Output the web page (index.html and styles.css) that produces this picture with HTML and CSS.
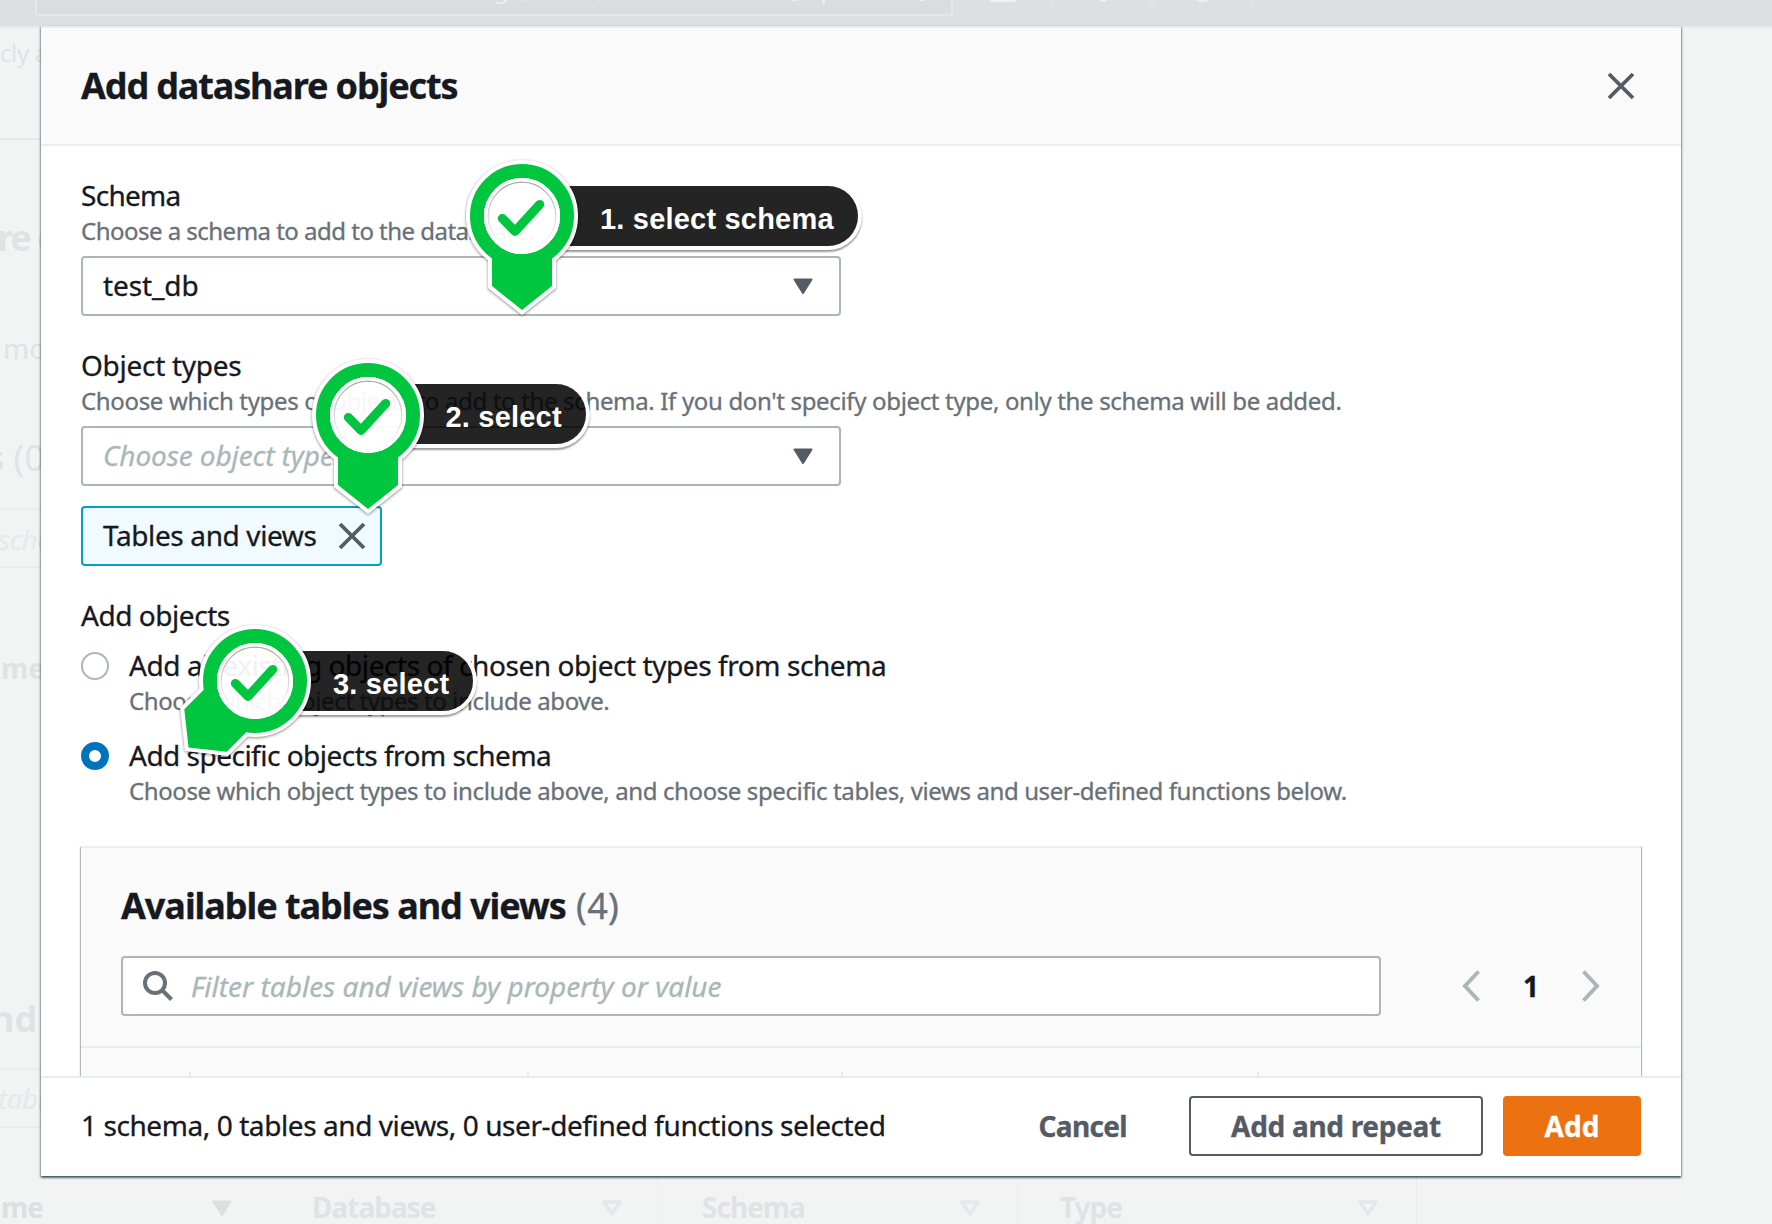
FILE: index.html
```html
<!DOCTYPE html>
<html lang="en">
<head>
<meta charset="utf-8">
<title>Add datashare objects</title>
<link rel="stylesheet" href="styles.css">
</head>
<body>
<div class="screen">

  <div class="backdrop" aria-hidden="true">
    <div class="topbar">
      <div class="topbar-search"><span class="topbar-hint">Search for services, features, blogs, docs, and more</span><span>[Option+S]</span></div>
      <svg class="topbar-icons" width="300" height="28" viewBox="0 0 300 28">
        <rect x="21" y="-20" width="28" height="22" rx="4" fill="#f0f1f2"/>
        <circle cx="135" cy="-3" r="5" fill="#f0f1f2"/>
        <circle cx="235" cy="-10" r="12" fill="#f0f1f2"/>
        <path d="M84 0v8M184 0v8M284 0v8" stroke="#e2e3e5" stroke-width="1.5"/>
      </svg>
    </div>
    <div class="strip">
      <span class="ghost ghost-note">cly a</span>
      <span class="ghost ghost-title">re objects</span>
      <span class="ghost ghost-more">mo</span>
      <span class="ghost ghost-count"><b>s</b> (0)</span>
      <span class="ghost ghost-input">schema</span>
      <span class="ghost ghost-name">me</span>
      <span class="ghost ghost-nd">nd</span>
      <span class="ghost ghost-input ghost-tab">table</span>
    </div>
    <div class="ghost-row">
      <div class="ghost-cell c1"><span>me</span><svg width="20" height="17" viewBox="0 0 20 17"><path d="M1.5 1.5h17L10 15z" fill="#dcdedf" stroke="#dcdedf" stroke-width="2" stroke-linejoin="round"/></svg></div>
      <div class="ghost-cell c2"><span>Database</span><svg width="20" height="17" viewBox="0 0 20 17"><path d="M2 2h16L10 14z" fill="none" stroke="#e5e8e8" stroke-width="3.4" stroke-linejoin="round"/></svg></div>
      <div class="ghost-cell c3"><span>Schema</span><svg width="20" height="17" viewBox="0 0 20 17"><path d="M2 2h16L10 14z" fill="none" stroke="#e5e8e8" stroke-width="3.4" stroke-linejoin="round"/></svg></div>
      <div class="ghost-cell c4"><span>Type</span><svg width="20" height="17" viewBox="0 0 20 17"><path d="M2 2h16L10 14z" fill="none" stroke="#e5e8e8" stroke-width="3.4" stroke-linejoin="round"/></svg></div>
    </div>
  </div>

  <div class="modal" role="dialog" aria-label="Add datashare objects">
    <header class="modal-header">
      <h1 class="modal-title">Add datashare objects</h1>
      <svg width="28" height="28" viewBox="0 0 28 28"><path d="M2 2l24 24M26 2L2 26" stroke="#545b64" stroke-width="3.8"/></svg>
    </header>

    <div class="modal-body">
      <section class="field">
        <div class="label l-schema">Schema</div>
        <div class="desc d-schema">Choose a schema to add to the datashare.</div>
        <div class="select"><span>test_db</span><svg width="20" height="17" viewBox="0 0 20 17"><path d="M1.5 1.5h17L10 15z" fill="#545b64" stroke="#545b64" stroke-width="2" stroke-linejoin="round"/></svg></div>
      </section>

      <section class="field">
        <div class="label l-types">Object types</div>
        <div class="desc d-types">Choose which types of objects to add to the schema. If you don't specify object type, only the schema will be added.</div>
        <div class="select"><span class="placeholder">Choose object types</span><svg width="20" height="17" viewBox="0 0 20 17"><path d="M1.5 1.5h17L10 15z" fill="#545b64" stroke="#545b64" stroke-width="2" stroke-linejoin="round"/></svg></div>
        <div class="token"><span>Tables and views</span><svg width="28" height="28" viewBox="0 0 28 28"><path d="M2 2l24 24M26 2L2 26" stroke="#545b64" stroke-width="3.8"/></svg></div>
      </section>

      <section class="field">
        <div class="label l-objects">Add objects</div>
        <div class="choice first">
          <span class="radio"></span>
          <div><div class="label l-all">Add all existing objects of chosen object types from schema</div>
          <div class="desc d-all">Choose which object types to include above.</div></div>
        </div>
        <div class="choice">
          <span class="radio on"></span>
          <div><div class="label l-specific">Add specific objects from schema</div>
          <div class="desc d-specific">Choose which object types to include above, and choose specific tables, views and user-defined functions below.</div></div>
        </div>
      </section>

      <section class="card">
        <h2 class="card-title">Available tables and views <span class="count">(4)</span></h2>
        <div class="tools">
          <div class="filter">
            <svg width="30" height="30" viewBox="0 0 30 30" fill="none" stroke="#687078" stroke-width="4"><circle cx="12" cy="12" r="10"/><path d="M19 19l9.5 9.5"/></svg>
            <span class="placeholder">Filter tables and views by property or value</span>
          </div>
          <div class="pager">
            <svg width="18" height="32" viewBox="0 0 18 32" fill="none" stroke="#aab7b8" stroke-width="4"><path d="M16.5 1.5L3 16l13.5 14.5"/></svg>
            <b>1</b>
            <svg width="18" height="32" viewBox="0 0 18 32" fill="none" stroke="#aab7b8" stroke-width="4"><path d="M1.5 1.5L15 16L1.5 30.5"/></svg>
          </div>
        </div>
        <div class="columns"><i></i><i></i><i></i><i></i></div>
      </section>
    </div>

    <footer class="modal-footer">
      <span class="summary">1 schema, 0 tables and views, 0 user-defined functions selected</span>
      <span class="btn link">Cancel</span>
      <span class="btn outline">Add and repeat</span>
      <span class="btn primary">Add</span>
    </footer>
  </div>

  <svg width="0" height="0" class="defs">
    <defs>
      <linearGradient id="rim" x1="0" y1="0" x2="0" y2="1"><stop offset="0" stop-color="#a8a8a8"/><stop offset=".6" stop-color="#e2e2e2"/><stop offset="1" stop-color="#fff"/></linearGradient>
      <circle id="ring" r="45" fill="none" stroke="#00c53e" stroke-width="14"/>
      <path id="tail" d="M-30 42V70L0 94L30 70V42z"/>
      <g id="face">
        <circle r="38" fill="#fff" fill-opacity=".94"/>
        <circle r="36" fill="none" stroke="#fff" stroke-width="4"/>
        <circle r="33.8" fill="none" stroke="url(#rim)" stroke-width="1.3"/>
        <path d="M-19.7 2.4L-7 15.4L17.7 -11.6" fill="none" stroke="#00c53e" stroke-width="9" stroke-linecap="round" stroke-linejoin="round"/>
      </g>
    </defs>
  </svg>

  <div class="callout one">
    <div class="pill"><span>1. select schema</span></div>
    <svg class="pin" width="220" height="220" viewBox="-110 -110 220 220">
      <g class="halo"><circle r="48"/><use href="#tail"/></g>
      <use href="#ring"/><use href="#tail" fill="#00c53e"/><use href="#face"/>
    </svg>
  </div>
  <div class="callout two">
    <div class="pill"><span>2. select</span></div>
    <svg class="pin" width="220" height="220" viewBox="-110 -110 220 220">
      <g class="halo"><circle r="48"/><use href="#tail"/></g>
      <use href="#ring"/><use href="#tail" fill="#00c53e"/><use href="#face"/>
    </svg>
  </div>
  <div class="callout three">
    <div class="pill"><span>3. select</span></div>
    <svg class="pin" width="220" height="220" viewBox="-110 -110 220 220">
      <g class="halo"><circle r="48"/><use href="#tail" transform="rotate(45)"/></g>
      <use href="#ring"/><use href="#tail" fill="#00c53e" transform="rotate(45)"/><use href="#face"/>
    </svg>
  </div>
</div>
</body>
</html>
```
FILE: styles.css
```css
* { box-sizing: border-box; }
body { margin: 0; font: 28px/36px "Noto Sans", sans-serif; color: #16191f; }
svg { display: block; flex: none; }
h1, h2 { margin: 0; }
.screen { position: relative; width: 1772px; height: 1224px; overflow: hidden; background: #f2f4f4; white-space: nowrap; }

/* Dimmed page behind the dialog */
.backdrop { position: absolute; inset: 0; display: flex; flex-direction: column; color: #e0e2e4; }
.topbar { height: 28px; flex: none; display: flex; overflow: hidden; background: #dedfe1; border-bottom: 2px solid #e6e8e9; }
.topbar-search { width: 918px; height: 60px; margin: -44px 0 0 35px; padding: 0 24px 0 40px; display: flex; justify-content: space-between; align-items: center; border: 2px solid #e6e7e8; border-radius: 4px; background: #dbdcdd; color: #eceded; letter-spacing: -.3px; }
.topbar-icons { margin-left: 15px; }
.strip { width: 41px; height: 1150px; flex: none; display: flex; flex-direction: column; overflow: hidden;
  background:
    linear-gradient(#e8eaea, #e8eaea) 0 110px / 100% 2px no-repeat,
    linear-gradient(#eaeded, #eaeded) 0 480px / 100% 2px no-repeat,
    linear-gradient(#eaeded, #eaeded) 0 538px / 100% 2px no-repeat,
    linear-gradient(#eaeded, #eaeded) 0 1040px / 100% 2px no-repeat,
    linear-gradient(#eaeded, #eaeded) 0 1098px / 100% 2px no-repeat; }
.ghost { height: 36px; flex: none; }
.ghost-note { margin-top: 7px; font-size: 24px; letter-spacing: -.4px; color: #e0e3e3; }
.ghost-title { margin: 149px 0 0 -3px; font-size: 36px; font-weight: 700; letter-spacing: -2px; }
.ghost-more { margin: 74px 0 0 3px; }
.ghost-count { margin: 74px 0 0 -14px; font-size: 36px; }
.ghost-input { margin: 45px 0 0 -2px; font-style: italic; letter-spacing: -.6px; color: #e6e9e9; }
.ghost-name { margin: 93px 0 0 1px; font-weight: 700; }
.ghost-nd { margin: 315px 0 0 -9px; font-size: 36px; font-weight: 700; }
.ghost-tab { margin-top: 43px; }
.ghost-row { position: absolute; left: 0; right: 0; top: 1176px; height: 48px; display: flex; font-weight: 700; }
.ghost-cell { display: flex; justify-content: space-between; align-items: flex-start; padding: 13px 36px 0 43px; border-right: 1.5px solid #eff1f1; letter-spacing: -1px; }
.ghost-cell svg { margin-top: 11px; }
.c1 { width: 269px; padding-left: 1px; color: #dddfe1; }
.c2 { width: 390px; }
.c3 { width: 358px; }
.c4 { width: 400px; padding-right: 38px; border-color: #eaecec; }

/* Dialog */
.modal { position: absolute; left: 41px; top: 26px; width: 1640px; height: 1150px; display: flex; flex-direction: column; background: #fff; box-shadow: 0 2px 2px rgba(0, 28, 36, .5), 1px 1px 2px rgba(0, 28, 36, .3), -1px 1px 2px rgba(0, 28, 36, .3); -webkit-text-stroke: .3px; }
.modal-header { height: 120px; flex: none; display: flex; justify-content: space-between; align-items: center; padding: 0 46px 0 40px; background: #fafafa; border: solid #eaeded; border-width: 2px 0; }
.modal-title { font-size: 36px; line-height: 48px; letter-spacing: -1.14px; }
.modal-body { height: 930px; flex: none; padding: 31px 39px 0; overflow: hidden; }
.field { margin: 0 1px 31px; }
.label { line-height: 36px; }
.desc { padding-top: 1px; font-size: 24px; line-height: 34px; color: #687078; }
.l-schema { letter-spacing: -.7px; }
.d-schema { letter-spacing: -.52px; }
.l-types { letter-spacing: -.28px; }
.d-types { letter-spacing: -.34px; }
.l-objects { letter-spacing: -.45px; }
.l-all { letter-spacing: -.43px; }
.d-all { letter-spacing: -.39px; }
.l-specific { letter-spacing: -.51px; }
.d-specific { letter-spacing: -.39px; }
.select { width: 760px; height: 60px; margin-top: 8px; padding: 0 26px 0 20px; display: flex; justify-content: space-between; align-items: center; border: 2px solid #aab7b8; border-radius: 4px; background: #fff; }
.select span, .token span { padding-bottom: 2px; letter-spacing: -.1px; }
.placeholder { color: #aab7b8; font-style: italic; }
.token { width: 301px; height: 60px; margin-top: 20px; padding: 0 14px 0 20px; display: flex; justify-content: space-between; align-items: center; border: 2px solid #00a1c9; border-radius: 4px; background: #f1faff; }
.token span { letter-spacing: -.38px; }
.choice { display: flex; gap: 20px; margin-top: 19px; }
.choice.first { margin-top: 14px; }
.radio { width: 28px; height: 28px; margin-top: 5px; border: 2px solid #aab7b8; border-radius: 50%; }
.radio.on { border: 8px solid #0073bb; }

.card { height: 300px; margin: 38px 1px 0; padding-top: 34px; background: #fafafa; border-top: 2px solid #eaeded; box-shadow: 1px 1px 1px rgba(0, 28, 36, .3), -1px 1px 1px rgba(0, 28, 36, .3); }
.card-title { margin-left: 40px; font-size: 36px; line-height: 48px; letter-spacing: -1.05px; }
.count { font-weight: 400; color: #687078; letter-spacing: .3px; margin-left: 2px; }
.tools { display: flex; justify-content: space-between; margin-top: 26px; padding: 0 41px 30px 40px; border-bottom: 2px solid #eaeded; }
.filter { width: 1260px; height: 60px; padding-left: 20px; display: flex; align-items: center; gap: 18px; border: 2px solid #aab7b8; border-radius: 4px; background: #fff; }
.pager { width: 138px; display: flex; align-items: center; justify-content: space-between; }
.pager b { padding-bottom: 1px; }
.columns { display: flex; padding: 24px 0 0 108px; height: 60px; }
.columns i { width: 338px; height: 36px; border-left: 2px solid #eaeded; }
.columns i:nth-child(2) { width: 314px; }
.columns i:nth-child(3) { width: 416px; }

.modal-footer { height: 100px; flex: none; display: flex; align-items: center; padding: 0 40px 2px; border-top: 2px solid #eaeded; }
.summary { flex: 1; padding-bottom: 2px; letter-spacing: -.42px; }
.btn { height: 60px; padding-bottom: 1px; display: flex; align-items: center; justify-content: center; border-radius: 4px; font-weight: 700; color: #545b64; }
.link { margin-right: 62px; letter-spacing: -.65px; }
.outline { width: 294px; margin-right: 20px; border: 2px solid #545b64; letter-spacing: -.3px; }
.primary { width: 138px; background: #ec7211; color: #fff; }

/* Numbered callouts laid over the dialog, anchored at the pin centre */
.defs { position: absolute; }
.callout { position: absolute; }
.one { left: 522px; top: 216px; }
.two { left: 367.5px; top: 415px; }
.three { left: 255px; top: 681px; }
.pin { position: absolute; left: -110px; top: -110px; }
.halo { fill: #fff; stroke: #fff; filter: drop-shadow(0 1.5px 1.5px rgba(0, 0, 0, .45)); }
.halo use { stroke-width: 8px; }
.halo circle { fill: none; stroke-width: 16px; }
.pill { position: absolute; left: 42px; top: -30px; height: 60px; display: flex; align-items: center; padding-left: 36px; border-radius: 0 30px 30px 0; background: rgba(0, 0, 0, .86); box-shadow: 0 0 0 4px #fff, 0 2px 2px 4px rgba(0, 0, 0, .4); color: #fff; font: 700 29px/36px "Liberation Sans", Arial, sans-serif; }
.pill span { padding-top: 5px; letter-spacing: .2px; }
.one .pill { width: 294px; }
.two .pill, .three .pill { width: 176px; }
.two .pill { top: -31px; }
```
